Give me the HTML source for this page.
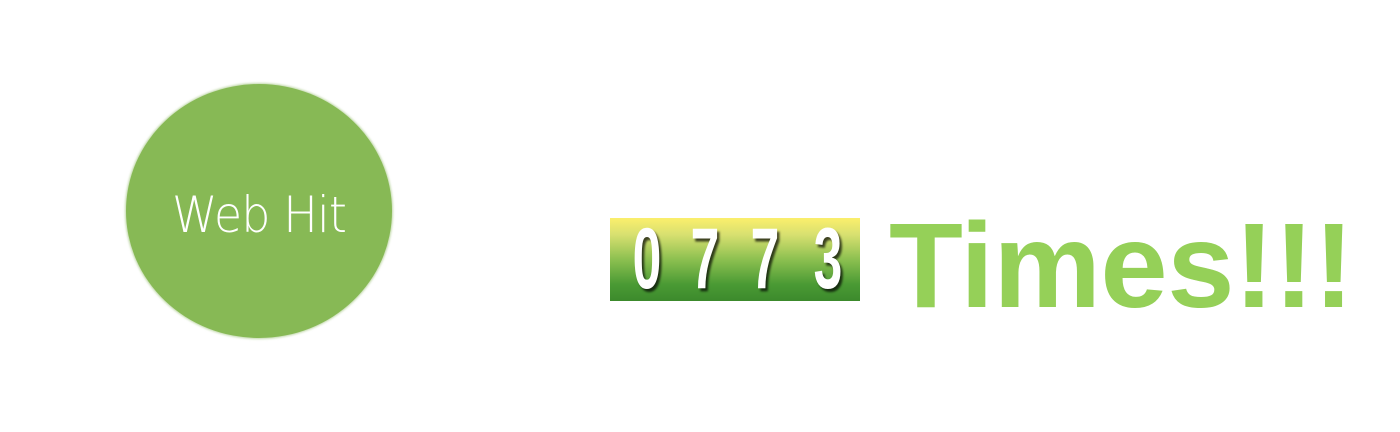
<!DOCTYPE html>
<html><head><meta charset="utf-8"><style>
html,body{margin:0;padding:0;background:#fff;width:1400px;height:432px;overflow:hidden;position:relative}
.c{position:absolute;left:126px;top:84px;width:266px;height:254px;border-radius:50%;background:#87b955;box-shadow:0 0 2px 1px rgba(150,190,110,.6)}
.c span{position:absolute;left:-20px;right:-20px;top:102px;text-align:center;color:#fff;font:200 50px "DejaVu Sans","Liberation Sans",sans-serif;letter-spacing:-1px;transform:scaleX(0.92)}
.ctr{position:absolute;left:610px;top:218px;width:250px;height:83px;background:linear-gradient(#fbef6c 0%,#d8e070 20%,#8cc050 50%,#4a9a34 80%,#3c8a2c 100%)}
.d{position:absolute;top:0;width:60px;text-align:center;color:#fff;font:bold 86px/83px "Liberation Sans",sans-serif;transform:scaleX(0.6);text-shadow:4px 3px 3px rgba(0,0,0,.7)}
.t{position:absolute;left:889px;top:205px;font:bold 121px/121px "Liberation Sans",sans-serif;color:#95d058;letter-spacing:-0.5px;white-space:nowrap}
</style></head><body>
<div class="c"><span>Web Hit</span></div>
<div class="ctr">
<div class="d" style="left:7px">0</div>
<div class="d" style="left:65px">7</div>
<div class="d" style="left:125px">7</div>
<div class="d" style="left:188px">3</div>
</div>
<div class="t">Times!!!</div>
</body></html>
